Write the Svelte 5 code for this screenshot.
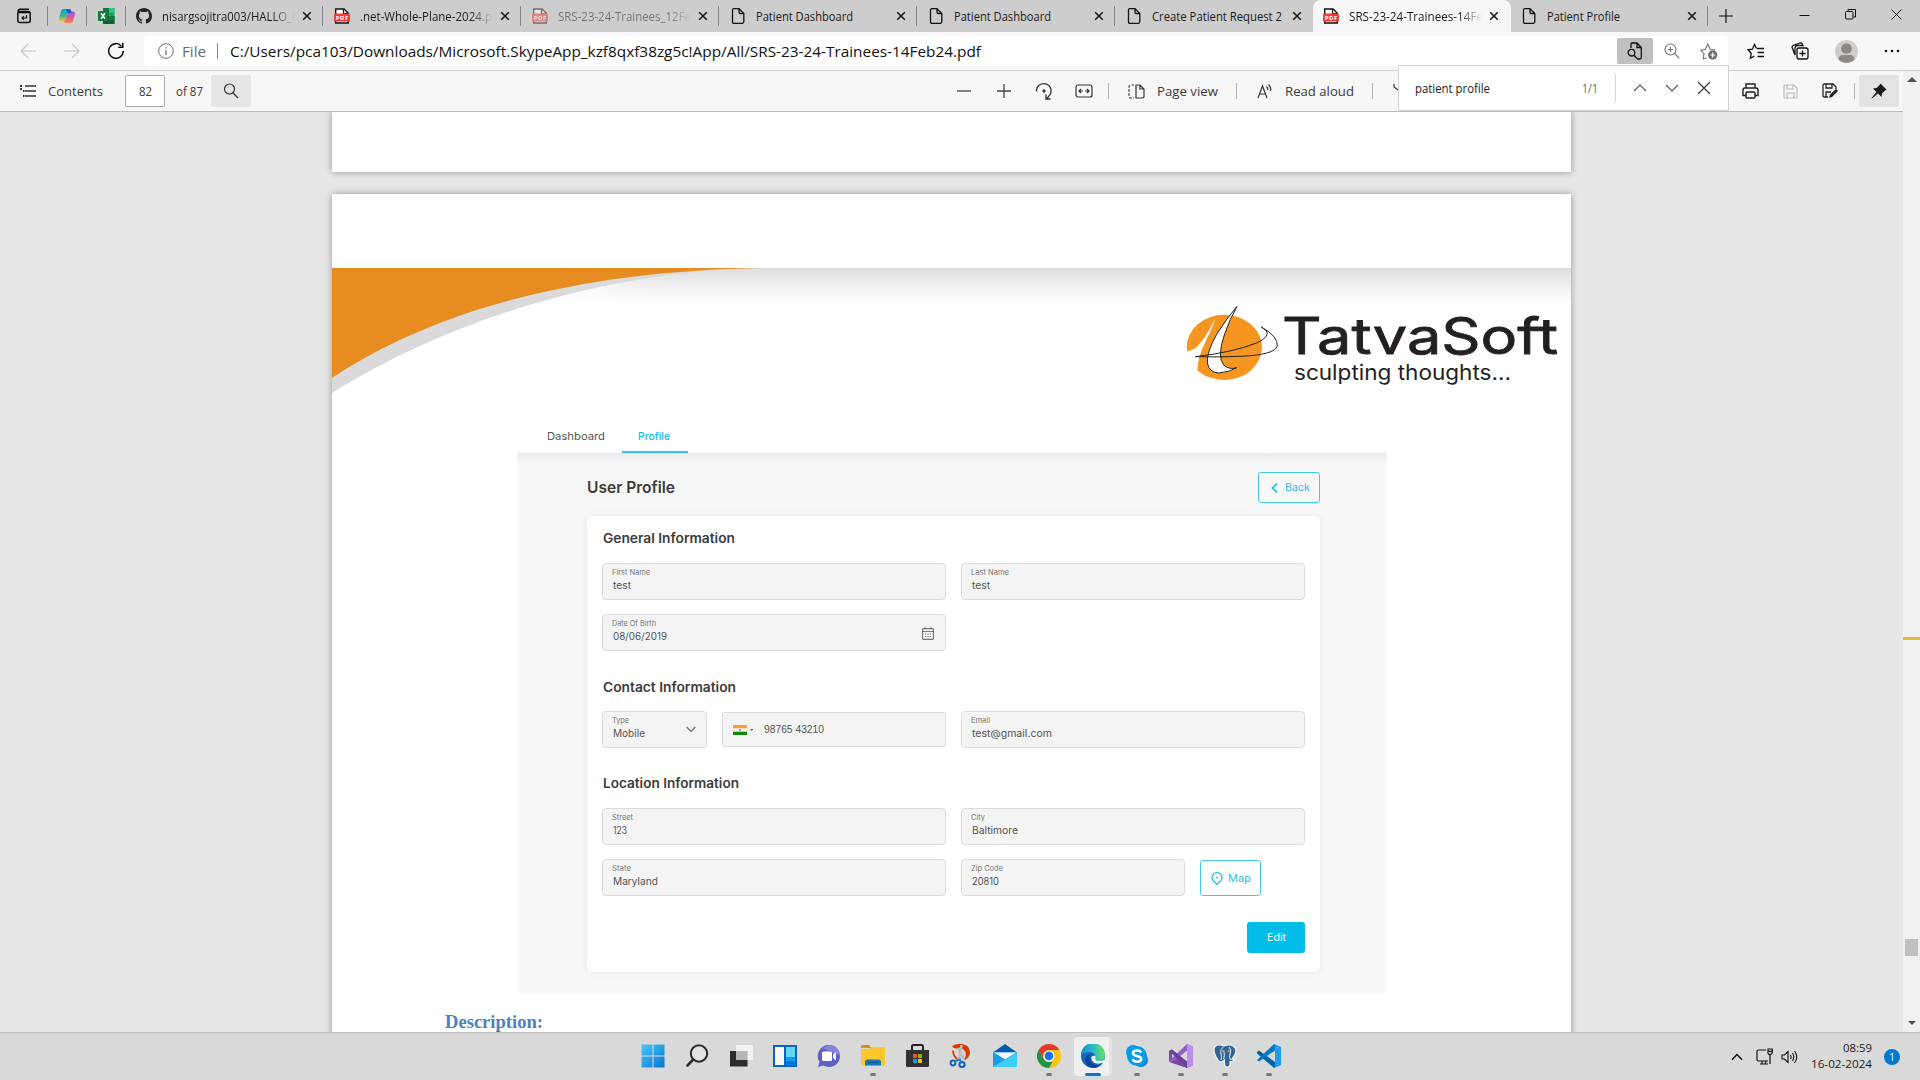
<script>
  const tabs = [
    { icon: 'github', title: 'nisargsojitra003/HALLO_P', width: 137 },
    { icon: 'pdf', title: '.net-Whole-Plane-2024.pd', width: 139 },
    { icon: 'pdf', title: 'SRS-23-24-Trainees_12Fe', width: 133, faded: true },
    { icon: 'page', title: 'Patient Dashboard', width: 97 },
    { icon: 'page', title: 'Patient Dashboard', width: 97 },
    { icon: 'page', title: 'Create Patient Request 2', width: 130 },
    { icon: 'pdf', title: 'SRS-23-24-Trainees-14Fe', width: 134, active: true },
    { icon: 'page', title: 'Patient Profile', width: 73 }
  ];
  const apps = ['start', 'search', 'taskview', 'widgets', 'chat', 'explorer', 'store', 'snip', 'mail', 'chrome', 'edge', 'skype', 'vs', 'postgres', 'vscode'];
  const running = ['explorer', 'chrome', 'edge', 'skype', 'vs', 'postgres', 'vscode'];
</script>

{#snippet label(text, width, kind, height = 20)}
  <svg class="label {kind}" {width} {height}>
    <text x="0" y={height / 2} dominant-baseline="central" textLength={width} lengthAdjust="spacingAndGlyphs">{text}</text>
  </svg>
{/snippet}

{#snippet field(name, nameWidth, value, valueWidth)}
  <div class="field">
    {@render label(name, nameWidth, 'field-name', 12)}
    <div class="field-value">{@render label(value, valueWidth, 'value', 15)}</div>
  </div>
{/snippet}

<div class="screen">
  <div class="tabstrip">
    <div class="pinned first">
      <svg width="16" height="16" viewBox="0 0 16 16" fill="none" stroke="#111" stroke-width="1.5"><rect x="1.8" y="3.5" width="12.4" height="11" rx="2" /><path d="M2 3.5Q2 1.2 4 1.2H13M2 4.5H14" /><path d="M10.5 7V10H6M7.8 8.3 6 10l1.8 1.8" stroke-width="1.2" /></svg>
    </div>
    <div class="pinned">
      <svg width="18" height="16" viewBox="0 0 18 16"><defs><linearGradient id="cp1" x1="0" y1="0" x2="0" y2="1"><stop stop-color="#159ce8" /><stop offset=".55" stop-color="#32b98b" /><stop offset="1" stop-color="#f3c530" /></linearGradient><linearGradient id="cp2" x1="0" y1="0" x2="0" y2="1"><stop stop-color="#8a62e8" /><stop offset=".5" stop-color="#e35696" /><stop offset="1" stop-color="#f78854" /></linearGradient></defs><path d="M5 1h6q1.6 0 2 1.6L13.6 5H10L8 11Q7.400 13.200 5.200 13.200H3Q.4 13 1.200 10L3 3Q3.500 1 5 1Z" fill="url(#cp1)" /><path d="M13 3.500h2q2.600.2 1.800 3.300l-1.800 6.400Q14.500 15 12.800 15H7.500Q6 15 5.500 13.300 7.300 13 8 11l1.800-6Q10.400 3.500 13 3.500Z" fill="url(#cp2)" /><path d="M8 1h3q1.600 0 2 1.600L13.600 5H10Z" fill="#1b55c4" /></svg>
    </div>
    <div class="pinned">
      <svg width="17" height="16" viewBox="0 0 17 16"><path d="M5 0h11.500v16H5z" fill="#21a366" /><path d="M5 0h6v8H5z" fill="#107c41" /><path d="M11 0h5.500v4.500H11z" fill="#33c481" /><path d="M5 8h11.500v8H5z" fill="#185c37" /><path d="M11 8h5.500v4H11z" fill="#107c41" /><rect y="3" width="10" height="10" rx="1" fill="#107c41" /><path d="M3 5.300 7 10.800M7 5.300 3 10.800" stroke="#fff" stroke-width="1.500" /></svg>
    </div>
    {#each tabs as tab}
      <div class="tab" class:active={tab.active} class:faded={tab.faded}>
        <span class="tab-icon">
          {#if tab.icon === 'github'}
            <svg width="16" height="16" viewBox="0 0 16 16"><path fill="#1f252b" d="M8 0C3.580 0 0 3.580 0 8c0 3.540 2.290 6.530 5.470 7.590.4.070.550-.170.550-.380v-1.490c-2.230.480-2.690-.950-2.690-.950-.360-.920-.890-1.170-.890-1.170-.730-.5.050-.490.050-.490.8.060 1.230.830 1.230.830.710 1.220 1.870.870 2.330.660.070-.520.280-.870.510-1.070-1.780-.2-3.640-.890-3.640-3.950 0-.870.310-1.590.820-2.150-.080-.2-.360-1.020.080-2.120 0 0 .670-.210 2.200.820a7.600 7.600 0 0 1 4 0c1.530-1.040 2.200-.820 2.200-.820.440 1.100.160 1.920.080 2.120.510.560.820 1.270.820 2.150 0 3.070-1.870 3.750-3.650 3.950.290.250.540.730.540 1.480v2.200c0 .210.150.460.550.380A8 8 0 0 0 16 8c0-4.420-3.580-8-8-8Z" /></svg>
          {:else if tab.icon === 'pdf'}
            <svg width="16" height="16" viewBox="0 0 16 16"><path d="M1.700 15V1H10l4.300 4.200V15Z" fill="#fff" stroke="#111" stroke-width="1.400" /><path d="M9.500 1v4.500H14" fill="none" stroke="#111" stroke-width="1.200" /><rect y="5.500" width="16" height="8" rx="1" fill="#f33c38" /><text x="1.800" y="11.900" font-size="6" font-weight="700" fill="#fff" textLength="12.500">PDF</text></svg>
          {:else}
            <svg width="16" height="16" viewBox="0 0 16 16" fill="none" stroke="#111" stroke-width="1.300"><path d="M2.500 2.200Q2.500.7 4 .7H9L13.800 5.500V13.800Q13.800 15.300 12.300 15.300H4Q2.500 15.300 2.500 13.800ZM9 1v3.300Q9 5.500 10.200 5.500H13.800" /></svg>
          {/if}
        </span>
        <span class="tab-title" class:long={tab.width > 132}>{@render label(tab.title, tab.width, 'small')}</span>
        <svg class="tab-close" width="10" height="10" viewBox="0 0 10 10" stroke="#111" stroke-width="1.500"><path d="M1.200 1.200 8.800 8.800M8.800 1.200 1.200 8.800" /></svg>
      </div>
    {/each}
    <div class="newtab"><svg width="14" height="14" viewBox="0 0 14 14" stroke="#111" stroke-width="1.200"><path d="M7 0V14M0 7H14" /></svg></div>
    <div class="window-controls">
      <svg width="11" height="11" stroke="#111"><path d="M.5 6.500H10.500" /></svg>
      <svg width="11" height="11" fill="none" stroke="#111"><rect x=".5" y="2.500" width="7.500" height="7.500" rx="1" /><path d="M3 2.500V.5H10.500V8H8.500" /></svg>
      <svg width="11" height="11" stroke="#111"><path d="M.5.5 10.500 10.500M10.500.5.5 10.500" /></svg>
    </div>
  </div>

  <div class="addressbar">
    <div class="nav">
      <svg width="16" height="16" fill="none" stroke="#c6c6c6" stroke-width="1.200"><path d="M16 8H1M8 1 1 8l7 7" /></svg>
      <svg width="16" height="16" fill="none" stroke="#c6c6c6" stroke-width="1.200"><path d="M0 8H15M8 1l7 7-7 7" /></svg>
      <svg width="17" height="18" fill="none" stroke="#111" stroke-width="1.500"><path d="M15.300 9A7.300 7.300 0 1 1 13.400 4M14.800.8V5.200H10.300" /></svg>
    </div>
    <div class="urlbox">
      <svg width="16" height="16" fill="none" stroke="#6e6e6e"><circle cx="8" cy="8" r="7.300" /><path d="M8 7V12M8 4.200V5.500" stroke-width="1.300" /></svg>
      <span class="scheme">{@render label('File', 24, 'muted')}</span>
      <i class="vline url-line"></i>
      {@render label('C:/Users/pca103/Downloads/Microsoft.SkypeApp_kzf8qxf38zg5c!App/All/SRS-23-24-Trainees-14Feb24.pdf', 751, 'url')}
      <div class="url-actions">
        <div class="pressed"><svg width="16" height="18" viewBox="0 0 16 18" fill="none" stroke="#111" stroke-width="1.300"><path d="M4 6V2.200Q4 1 5.200 1H10L14.300 5.500V15.500Q14.300 17 13 17H10M10 1V5.500H14.300" /><circle cx="4.500" cy="10.700" r="3.300" /><path d="M7 13.200 10 16.500" /></svg></div>
        <div class="cell38"><svg width="16" height="16" fill="none" stroke="#777" stroke-width="1.200"><circle cx="6.500" cy="6.500" r="5.500" /><path d="M10.500 10.500 15.300 15.300M3.800 6.500H9.200M6.500 3.800V9.200" /></svg></div>
        <div class="cell38"><svg width="18" height="17" viewBox="0 0 18 17" fill="none" stroke="#777" stroke-width="1.200"><path d="M7 15 3.200 15.800 4 10.700.8 7.300 5.200 6.500 7.800 1 10.200 6.500 15 7" /><circle cx="12.700" cy="12" r="4.700" fill="#707070" stroke="none" /><path d="M12.700 9.500V14.500M10.200 12H15.200" stroke="#fff" /></svg></div>
      </div>
    </div>
    <div class="browser-actions">
      <svg width="18" height="17" viewBox="0 0 18 17" fill="none" stroke="#111" stroke-width="1.300"><path d="M9.500 5.500 7.500 1.500 5.300 6.200 1 6.800 4.200 10.200 3.400 15.300 7.300 13M10 5.500H17M10.500 9.500H17M10.500 13.500H17" /></svg>
      <svg width="18" height="18" viewBox="0 0 18 18" fill="none" stroke="#111" stroke-width="1.300"><rect x="6" y="6" width="11" height="11" rx="2" /><path d="M11.500 8.500V14.500M8.500 11.500H14.500M4 13 1.200 5.500Q.8 4 2.300 3.300L9 1Q10.500.6 11.300 2L12 3.500H6Q4 4 4 6Z" /></svg>
      <svg width="23" height="23" viewBox="0 0 23 23"><circle cx="11.500" cy="11.500" r="11.500" fill="#d0cec9" /><circle cx="11.500" cy="8.500" r="5.300" fill="#8e8984" /><path d="M3.500 19.500Q3.500 15 8 15H15Q19.500 15 19.500 19.500A11.500 11.500 0 0 1 3.500 19.500Z" fill="#8e8984" /></svg>
      <svg width="16" height="16"><path d="M2 8h0M8 8h0M14 8h0" stroke="#111" stroke-width="2.600" stroke-linecap="round" /></svg>
    </div>
    <div class="findbox">
      {@render label('patient profile', 75, 'small')}
      <span class="count">{@render label('1/1', 16, 'small dim')}</span>
      <i class="vline find-line"></i>
      <div class="find-actions">
        <svg width="14" height="14" fill="none" stroke="#555" stroke-width="1.100"><path d="M1 10 7 4l6 6" /></svg>
        <svg width="14" height="14" fill="none" stroke="#555" stroke-width="1.100"><path d="M1 4l6 6 6-6" /></svg>
        <svg width="14" height="14" stroke="#333" stroke-width="1.100"><path d="M1 1 13 13M13 1 1 13" /></svg>
      </div>
    </div>
  </div>

  <div class="workspace">
    <div class="viewer">
      <div class="toolbar">
        <div class="tool-left">
          <svg class="toc" width="17" height="14" fill="none" stroke="#333" stroke-width="1.300"><path d="M5 2H16M5 7H16M5 12H16" /><path d="M0 2H2M3 7H4.500M3 12H4.500M0 5H2" stroke-width="1.800" /></svg>
          {@render label('Contents', 55, 'medium')}
          <div class="page-input">{@render label('82', 13, 'medium')}</div>
          {@render label('of 87', 27, 'medium')}
          <div class="find-button"><svg width="16" height="16" fill="none" stroke="#333" stroke-width="1.200"><circle cx="6.500" cy="6" r="5" /><path d="M10 10 15 15" /></svg></div>
        </div>
        <div class="tool-mid">
          <div class="cell40"><svg width="14" height="14" stroke="#444" stroke-width="1.300"><path d="M0 7H14" /></svg></div>
          <div class="cell40"><svg width="14" height="14" stroke="#444" stroke-width="1.300"><path d="M0 7H14M7 0V14" /></svg></div>
          <div class="cell40"><svg width="18" height="18" fill="none" stroke="#333" stroke-width="1.300"><path d="M1.500 9.500A7.300 7.300 0 1 1 13.500 14.500L12 16.500M11 12.500v4.500h4.500" /><circle cx="9" cy="9" r="1" /></svg></div>
          <div class="cell40"><svg width="18" height="14" fill="none" stroke="#333" stroke-width="1.200"><rect x="1" y="1" width="16" height="12" rx="2" /><path d="M4 7H8M10 7H14M6 5 4 7l2 2M12 5l2 2-2 2" /></svg></div>
          <i class="vline bar-line"></i>
          <svg class="pv" width="17" height="15" viewBox="0 0 17 15" fill="none" stroke="#333" stroke-width="1.200"><path d="M8 1H12L16 5V12.500Q16 14 14.500 14H8ZM12 1V5H16" /><path d="M6 1H3Q1 1 1 3V12Q1 14 3 14H6" stroke-dasharray="2.500 1.500" /></svg>
          {@render label('Page view', 61, 'medium')}
          <i class="vline bar-line second"></i>
          <svg class="aloud" width="17" height="16" viewBox="0 0 17 16" fill="none" stroke="#333" stroke-width="1.200"><path d="M1 15 5.500 3 10 15M2.700 11H8.300M9.500 3.500Q11 5 10.700 7M11.500 1.500Q14.500 4.500 13.500 8" /></svg>
          {@render label('Read aloud', 69, 'medium')}
          <i class="vline bar-line third"></i>
          <svg class="draw" width="18" height="16" fill="none" stroke="#333" stroke-width="1.200"><path d="M1 1V4L5 7H13L17 4V1M6 8v6h6V8" /></svg>
        </div>
        <div class="tool-right">
          <div class="cell40"><svg width="17" height="16" viewBox="0 0 17 16" fill="none" stroke="#222" stroke-width="1.400"><path d="M4 5V1H13V5M4 12.500H1V7Q1 5 3 5H14Q16 5 16 7V12.500H13" /><rect x="4" y="9" width="9" height="6" rx="1" /></svg></div>
          <div class="cell40"><svg width="15" height="15" viewBox="0 0 15 15" fill="none" stroke="#bbb" stroke-width="1.200"><path d="M1 2Q1 1 2 1H11L14 4V13Q14 14 13 14H2Q1 14 1 13ZM4 1V5H10V1M4 14V9H11V14" /></svg></div>
          <div class="cell40"><svg width="17" height="16" viewBox="0 0 17 16" fill="none" stroke="#222" stroke-width="1.300"><path d="M6 14H2.500Q1 14 1 12.500V2.500Q1 1 2.500 1H11L14 4V6M4 1V5H10V1M4 14V9H9" /><path d="M7 15 8 11.500 14 6 16 8 10 14Z" fill="#222" stroke="none" /></svg></div>
          <i class="vline bar-line"></i>
          <div class="pin"><svg width="16" height="16" viewBox="0 0 16 16"><path d="M9.500.5 15.500 6.500 14 7.500 11 10.500 10.500 14 7 10.500 1 15.500.5 15 5.500 9 2 5.500 5.500 5 8.500 2Z" fill="#1a1a1a" /></svg></div>
        </div>
      </div>

      <div class="canvas">
        <div class="sheet previous"></div>
        <div class="sheet current">
          <svg class="banner" width="1239" height="145" viewBox="0 0 1239 145">
            <defs>
              <linearGradient id="shade" x1="0" y1="0" x2="0" y2="1"><stop stop-color="#dedede" /><stop offset=".5" stop-color="#f0f0f0" /><stop offset="1" stop-color="#fff" /></linearGradient>
              <linearGradient id="fade-left" x1="0" x2="1" y1="0" y2="0"><stop stop-color="#fff" /><stop offset="1" stop-color="#fff" stop-opacity="0" /></linearGradient>
            </defs>
            <rect width="1239" height="36" fill="url(#shade)" />
            <rect x="150" width="180" height="36" fill="url(#fade-left)" />
            <path d="M0 0H429C280 3 124 48 0 125Z" fill="#dadada" />
            <path d="M0 0H429C260 3 112 36 0 110Z" fill="#e68c20" />
            <g transform="translate(768 -28) scale(.33333)">
              <ellipse cx="373" cy="322" rx="113" ry="98" fill="#f49620" />
              <path d="M345 236Q320 290 291 320Q276 333 258 334L250 400 292 394Q294 350 318 303Q338 268 345 236Z" fill="#fff" />
              <path d="M293 391Q293 350 318 303L345 243 370 240 350 370 320 410Z" fill="#f49620" />
              <path d="M411 199Q380 235 350 283Q320 335 322 369Q328 398 356 399Q388 397 410 383Q388 390 372 376Q350 352 373 285Q390 235 411 199Z" fill="#fff" stroke="#222" stroke-width="3" />
              <path d="M286 350Q395 338 470 309Q512 289 499 272L484 261Q535 290 532 318Q524 345 420 349Q350 352 286 350" fill="none" stroke="#222" stroke-width="3" />
            </g>
            <text class="brand" x="950" y="86" textLength="276" lengthAdjust="spacingAndGlyphs">TatvaSoft</text>
            <text class="motto" x="962" y="112" textLength="217" lengthAdjust="spacingAndGlyphs">sculpting thoughts...</text>
          </svg>

          <div class="portal">
            <div class="portal-tabs">
              <div class="ptab">{@render label('Dashboard', 58, 'ptext')}</div>
              <div class="ptab selected">{@render label('Profile', 32, 'ptext strong')}</div>
            </div>
            <div class="portal-body">
              <div class="title-row">
                {@render label('User Profile', 88, 'title', 22)}
                <div class="back"><svg width="7" height="10" fill="none" stroke="#17b9e6" stroke-width="1.600"><path d="M6 .7 1.500 5 6 9.300" /></svg>{@render label('Back', 25, 'btn', 18)}</div>
              </div>
              <div class="card">
                <div class="heading">{@render label('General Information', 132, 'section')}</div>
                <div class="grid">
                  {@render field('First Name', 38, 'test', 18)}
                  {@render field('Last Name', 38, 'test', 18)}
                  <div class="with-icon">
                    {@render field('Date Of Birth', 44, '08/06/2019', 54)}
                    <svg class="calendar" width="12" height="13" viewBox="0 0 12 13" fill="none" stroke="#777" stroke-width="1.200"><rect x=".6" y="1.600" width="10.800" height="10.800" rx=".8" /><path d="M.6 4.500H11.400M3 0V2M9 0V2" /><path d="M3 7H9M3 9.500H9" stroke-dasharray="1.400 .9" /></svg>
                  </div>
                </div>
                <div class="heading contact">{@render label('Contact Information', 133, 'section')}</div>
                <div class="grid">
                  <div class="phone-row">
                    <div class="with-icon type">
                      {@render field('Type', 17, 'Mobile', 32)}
                      <svg class="chevron" width="10" height="7" fill="none" stroke="#777" stroke-width="1.300"><path d="M.7 1 5 5.500 9.300 1" /></svg>
                    </div>
                    <div class="phone">
                      <svg width="20" height="10" viewBox="0 0 20 10"><rect width="14" height="10" fill="#f4f4f4" /><rect width="14" height="3.200" fill="#f93" /><rect y="6.700" width="14" height="3.300" fill="#138808" /><circle cx="7" cy="5" r="1" fill="#8088a0" /><path d="M17.200 4.200h3L18.700 6Z" fill="#444" /></svg>
                      {@render label('98765 43210', 60, 'digits', 18)}
                    </div>
                  </div>
                  {@render field('Email', 19, 'test@gmail.com', 80)}
                </div>
                <div class="heading location">{@render label('Location Information', 136, 'section')}</div>
                <div class="grid">
                  {@render field('Street', 21, '123', 14)}
                  {@render field('City', 14, 'Baltimore', 46)}
                  {@render field('State', 19, 'Maryland', 45)}
                  <div class="zip-row">
                    {@render field('Zip Code', 32, '20810', 27)}
                    <div class="map"><svg width="12" height="13" viewBox="0 0 12 13" fill="none" stroke="#17b9e6" stroke-width="1.300"><path d="M6 12.200Q1 8.500 1 5.500A5 4.800 0 0 1 11 5.500Q11 8.500 6 12.200Z" /><circle cx="6" cy="5.500" r=".9" fill="#17b9e6" stroke="none" /></svg>{@render label('Map', 23, 'btn')}</div>
                  </div>
                </div>
                <div class="edit">{@render label('Edit', 19, 'btn white', 18)}</div>
              </div>
            </div>
          </div>
          <div class="description">{@render label('Description:', 98, 'desc', 24)}</div>
        </div>
      </div>
    </div>
    <div class="scrollbar">
      <svg width="10" height="5"><path d="M0 5 5 0 10 5Z" fill="#505050" /></svg>
      <div class="track"><i class="hit"></i><i class="thumb"></i></div>
      <svg width="8" height="4"><path d="M0 0H8L4 4Z" fill="#505050" /></svg>
    </div>
  </div>

  <div class="taskbar">
    <div class="apps">
      {#each apps as app}
        <div class="app" class:focused={app === 'edge'} class:running={running.includes(app)}>
          <svg width="24" height="24" viewBox="0 0 24 24">
            {#if app === 'start'}
              <defs><linearGradient id="win" x1="0" y1="0" x2="1" y2="1"><stop stop-color="#47cbfa" /><stop offset="1" stop-color="#0874d0" /></linearGradient></defs>
              <path d="M.5.5h11v11H.5zM12.500.5h11v11h-11zM.5 12.500h11v11H.5zM12.500 12.500h11v11h-11z" fill="url(#win)" />
            {:else if app === 'search'}
              <circle cx="14" cy="9.500" r="8.200" fill="#e4e4e4" stroke="#2c2c2c" stroke-width="2" /><path d="M8.200 15.500 2.500 21.500" stroke="#2c2c2c" stroke-width="2.600" stroke-linecap="round" />
            {:else if app === 'taskview'}
              <rect x="1" y="7" width="17.500" height="15.500" fill="#2c2c2c" /><rect x="7" y="1" width="17" height="15" fill="#f5f5f5" fill-opacity=".9" /><path d="M7 7h11.500v9H7z" fill="#b6b6b6" />
            {:else if app === 'widgets'}
              <path d="M0 1h24v22H0z" fill="#0a67b8" /><path d="M2 3h9v18H2z" fill="#f8f8f8" /><path d="M13 3h9v10h-9z" fill="#62d5fb" /><path d="M13 13h9v8h-9z" fill="#1795ef" /><path d="M13 17h9v4h-9z" fill="#0078e8" />
            {:else if app === 'chat'}
              <path d="M12 1A11 11 0 1 1 6.500 21.500L1 23 2.500 18A11 11 0 0 1 12 1Z" fill="#605fc5" /><path d="M12 1A11 11 0 0 1 23 12Q16 8 5 4Z" fill="#8584dc" /><rect x="5" y="7.500" width="10" height="9.500" rx="1.500" fill="#fff" /><path d="M16 10.500 19 8v8.500L16 14Z" fill="#fff" />
            {:else if app === 'explorer'}
              <path d="M0 2Q0 1 1 1H8l2.500 3H0Z" fill="#d89607" /><path d="M0 5H8l3-2H24V21.500H0Z" fill="#fbc72d" /><path d="M4 21.500V18q0-2.500 2.500-2.500h11Q20 15.500 20 18v3.500Z" fill="#1479bd" /><path d="M7 18.500H17" stroke="#0c558b" stroke-width="1.500" />
            {:else if app === 'store'}
              <path d="M7 6.500V2.500Q7 1 8.500 1h8Q18 1 18 2.500V6.500" fill="none" stroke="#222" stroke-width="2" /><path d="M1 6H24V21.500Q24 23 22.500 23h-20Q1 23 1 21.500Z" fill="#303030" /><path d="M8 10h4v4H8z" fill="#f25022" /><path d="M13 10h4v4h-4z" fill="#7fba00" /><path d="M8 15h4v4H8z" fill="#00a4ef" /><path d="M13 15h4v4h-4z" fill="#ffb900" />
            {:else if app === 'snip'}
              <path d="M3 2.500Q5 0 9 0H13Q21 1 21 9Q20.500 14 15 16.500Q17.500 12 16.500 8Q14 3 8 4.500Q5 5 3 2.500Z" fill="#d83b01" /><path d="M4 6.500Q4 12 9 16" fill="none" stroke="#d83b01" stroke-width="1.800" /><path d="M9 4 15 15M12.500 1 9.500 17" stroke="#bdbdbd" stroke-width="2.600" /><circle cx="4" cy="19" r="2.400" fill="none" stroke="#0d65b5" stroke-width="2" /><circle cx="13" cy="20.500" r="2.600" fill="none" stroke="#0d65b5" stroke-width="2" /><path d="M6 17.500 11 15.500 12 18" fill="none" stroke="#1684d8" stroke-width="1.800" />
            {:else if app === 'mail'}
              <path d="M0 8.500 12 0 24 8.500Z" fill="#0759a9" /><path d="M0 8H24V23H0Z" fill="#20a6e8" /><path d="M1 8.500H23L12 15.500Z" fill="#f5f8fa" /><path d="M0 8.500 12 15.500 0 23Z" fill="#1b9de2" /><path d="M0 23 24 8.500V23Z" fill="#3ccdf8" />
            {:else if app === 'chrome'}
              <circle cx="12" cy="12" r="12" fill="#fbc116" /><path d="M1.600 6A12 12 0 0 1 22.400 6H12A6 6 0 0 0 6.800 15Z" fill="#e33b2e" /><path d="M1.600 6 6.800 15A6 6 0 0 0 12 18h5.200L12 24A12 12 0 0 1 1.600 6Z" fill="#229342" /><path d="M17.200 15A6 6 0 0 0 12 6H22.400A12 12 0 0 1 12 24Z" fill="#fcc31c" /><circle cx="12" cy="12" r="5.600" fill="#fff" /><circle cx="12" cy="12" r="4.400" fill="#1a73e8" />
            {:else if app === 'edge'}
              <defs><linearGradient id="edge-top" x1="0" x2="1" y1=".5" y2=".4"><stop stop-color="#128acb" /><stop offset=".5" stop-color="#2cbccb" /><stop offset="1" stop-color="#6ce651" /></linearGradient></defs>
              <circle cx="12" cy="12" r="12" fill="#126ac0" /><path d="M0 11A12 12 0 0 1 24 11Q24 17 18 17Q14 17 14.500 14.500Q16 12 13 9.500Q7 6 0 11Z" fill="url(#edge-top)" /><path d="M8.500 12Q7.500 20 16 21.500Q20 21.500 22.500 18Q18 24 12 24Q4 22 4 15Q5 11.500 10 9.500Q8.500 10.500 8.500 12Z" fill="#0c4592" /><path d="M14 11.500Q15.500 13 14.500 14.500Q14 17 18 17Q21 17 23.500 15.500L22.500 18.500Q18 20.500 13.500 19Q9.500 16 10.500 12.500Z" fill="#f2f4f5" />
            {:else if app === 'skype'}
              <circle cx="8" cy="8" r="7" fill="#0a9be8" /><circle cx="16" cy="16" r="7" fill="#0085dc" /><circle cx="12" cy="12" r="10" fill="#069ce9" /><path d="M16 8.500Q15 6.500 12 6.500Q8 6.500 8 9Q8 11.300 12 12Q16.200 12.800 16.200 15Q16.200 17.700 12 17.700Q8.500 17.700 7.700 15.200" fill="none" stroke="#fff" stroke-width="2.500" />
            {:else if app === 'vs'}
              <path d="M0 7 3 5.500 18 18V24L1.500 18.500 0 17Z" fill="#7b48a8" /><path d="M3 8.500V15.500L6.500 12Z" fill="#d9d9d9" /><path d="M0 17 18 0 24 2.500V21.500L18 24V6.500L3 18.500Z" fill="#8e5fc5" /><path d="M18 0 24 2.500V21.500L18 24Z" fill="#bd8ef0" /><path d="M3 5.500 18 17.500V24L0 7Z" fill="#68429a" />
            {:else if app === 'postgres'}
              <path d="M1 6Q1 1 6 1Q9 1 11 2Q16 0 20 2Q24 4 22.500 9Q21 13 19 15Q21 16 22 16Q20 18 17 17.500V21Q16 24 12.500 22.500Q11 21 11.500 16Q7 20 5 16Q1 10 1 6Z" fill="#34648f" stroke="#f2f5f7" stroke-width="1.200" /><path d="M10.500 3Q7 5 8 10Q9 14 8 16M16 3Q19 6 17 10 15.500 14 18 16M11 8Q12 12 10.500 15" fill="none" stroke="#f0f3f5" /><path d="M9.500 7h2M15 7h1.500" stroke="#fff" stroke-width="1.200" />
            {:else}
              <path d="M0 8 2 6.500 18 18V24Q17 24 16 23L0 9.500Z" fill="#0065a9" /><path d="M0 16 17 0 18 .2V6.500L2 17.500Z" fill="#007acc" /><path d="M17 0 24 3V21L17 24Q18 23.500 18 22V2Q18 .5 17 0Z" fill="#1f9cf0" />
            {/if}
          </svg>
          <i class="indicator"></i>
        </div>
      {/each}
    </div>
    <div class="tray">
      <svg width="12" height="8" fill="none" stroke="#111" stroke-width="1.400"><path d="M1 6.700 6 1.500l5 5.200" /></svg>
      <svg class="net" width="17" height="17" viewBox="0 0 17 17" fill="none" stroke="#111" stroke-width="1.200"><path d="M10 2H2.500Q1 2 1 3.500V11.500Q1 13 2.500 13H12M6 13V16M9.500 13V16M4 16H12M14 7V16M12 1H16.300V4Q16.300 6.500 14 6.500T12 4ZM12 3.300H16" /></svg>
      <svg class="sound" width="17" height="14" viewBox="0 0 17 14" fill="none" stroke="#111" stroke-width="1.100"><path d="M1 5H3.500L7 1.500V12.500L3.500 9H1ZM9.500 5Q10.800 7 9.500 9M11.500 3Q14 7 11.500 11M13.500 1Q18 7 13.500 13" /></svg>
      <div class="clock">{@render label('08:59', 29, 'clocktext', 16)}{@render label('16-02-2024', 61, 'clocktext', 16)}</div>
      <div class="badge">1</div>
    </div>
  </div>
</div>

<style>
  :global(body) { margin: 0; overflow: hidden; }
  .screen { width: 1920px; height: 1080px; display: flex; flex-direction: column; background: #e6e6e6; font-family: 'Open Sans', 'Noto Sans', sans-serif; color: #111; overflow: hidden; }
  .screen * { box-sizing: border-box; }
  svg { display: block; flex: none; }
  .label { overflow: visible; fill: #1a1a1a; }
  .small { font-size: 12px; }
  .dim { fill: #666; }
  .muted { font-size: 14.5px; fill: #6b6b6b; }
  .url { font-size: 14.5px; fill: #111; }
  .medium { font-size: 13.3px; fill: #3b3b3b; }
  .vline { width: 1px; background: #b5b5b5; flex: none; }

  .tabstrip { height: 32px; background: #cdcdcd; display: flex; flex: none; align-items: center; }
  .pinned { width: 39px; height: 20px; border-right: 1px solid #858585; display: flex; flex: none; align-items: center; justify-content: center; }
  .pinned.first { width: 48px; }
  .tab { width: 198px; height: 32px; flex: none; display: flex; align-items: center; padding-left: 10px; background: linear-gradient(#858585, #858585) right 1px center / 1px 20px no-repeat; }
  .tab.active { background: #f7f7f7; border-radius: 8px 8px 0 0; margin-left: -1px; }
  .tab:last-of-type { width: 197px; }
  .tab:has(+ .active) { background: none; }
  .tab-icon { width: 26px; flex: none; }
  .tab-title { width: 137px; overflow: hidden; flex: none; }
  .tab-title.long { width: 133px; margin-right: 4px; mask-image: linear-gradient(90deg, #000 110px, transparent 133px); }
  .tab-close { margin-left: 3px; }
  .faded .tab-icon, .faded .tab-title { opacity: .5; }
  .newtab { width: 36px; display: flex; justify-content: center; margin-left: -1px; }
  .window-controls { margin-left: auto; display: flex; gap: 35px; padding: 0 18px 4px 0; }

  .addressbar { height: 39px; background: #f7f7f7; border-bottom: 1px solid #d1d1d1; display: flex; flex: none; align-items: center; position: relative; }
  .nav { width: 144px; display: flex; gap: 28px; padding-left: 20px; align-items: center; }
  .urlbox { width: 1584px; height: 30px; background: #fff; border-radius: 4px; display: flex; align-items: center; padding-left: 14px; }
  .scheme { margin-left: 8px; }
  .url-line { height: 16px; margin: 0 12px 0 11px; background: #888; }
  .url-actions { margin: 0 1px 0 auto; display: flex; align-items: center; }
  .pressed { width: 36px; height: 26px; border-radius: 2px; background: #c0c0c0; display: flex; justify-content: center; align-items: center; }
  .cell38 { width: 37px; display: flex; justify-content: center; }
  .browser-actions { display: flex; align-items: center; padding-left: 19px; gap: 26px; }
  .findbox { position: absolute; z-index: 5; left: 1398px; top: 33px; width: 331px; height: 46px; background: #fff; border: 1px solid #d4d4d4; display: flex; align-items: center; padding: 0 0 1px 16px; }
  .count { margin-left: 92px; }
  .find-line { height: 28px; margin-left: 17px; background: #d5d5d5; }
  .find-actions { display: flex; gap: 18px; margin-left: 17px; }

  .workspace { height: 961px; flex: none; display: flex; }
  .viewer { width: 1903px; height: 961px; overflow: hidden; }
  .toolbar { height: 41px; background: #f7f7f7; border-bottom: 1px solid #bdbdbd; display: flex; align-items: center; }
  .tool-left { display: flex; align-items: center; width: 944px; }
  .toc { margin: 0 11px 0 20px; }
  .page-input { width: 40px; height: 32px; margin: 0 11px 0 22px; background: #fff; border: 1px solid #ababab; border-radius: 2px; display: flex; align-items: center; justify-content: center; }
  .find-button { width: 40px; height: 32px; margin-left: 8px; background: #e5e5e5; border-radius: 2px; display: flex; align-items: center; justify-content: center; }
  .tool-mid { display: flex; align-items: center; width: 786px; }
  .cell40 { width: 40px; display: flex; justify-content: center; flex: none; }
  .bar-line { height: 16px; margin-left: 4px; }
  .pv { margin: 0 12px 0 19px; }
  .second { margin-left: 18px; }
  .aloud { margin: 0 11px 0 20px; }
  .third { margin-left: 18px; }
  .draw { margin-left: 20px; }
  .tool-right { display: flex; align-items: center; }
  .pin { width: 40px; height: 32px; margin-left: 4px; background: #e3e3e3; border-radius: 2px; display: flex; align-items: center; justify-content: center; }

  .canvas { height: 920px; overflow: hidden; padding-left: 332px; background: #e6e6e6; }
  .sheet { width: 1239px; background: #fff; box-shadow: 0 0 7px rgba(0, 0, 0, .35); }
  .previous { height: 60px; }
  .current { height: 900px; margin-top: 22px; padding-top: 74px; }
  .brand { font: 50px Inter, sans-serif; fill: #231f20; stroke: #231f20; stroke-width: .8px; }
  .motto { font: 21px Inter, sans-serif; fill: #231f20; }

  .portal { width: 870px; margin: 6px 0 0 185px; font-family: Inter, sans-serif; }
  .portal-tabs { height: 34px; display: flex; padding-left: 14px; }
  .ptab { padding: 7px 17px 0 16px; }
  .ptab.selected { width: 66px; border-bottom: 2px solid #37c5ea; }
  .ptext { font-size: 10.8px; fill: #555; }
  .strong { fill: #17b9e6; font-weight: 500; }
  .portal-body { height: 540px; padding: 19px 67px 0 70px; background: linear-gradient(#ebebeb, #f8f8f8 12px); }
  .title-row { height: 31px; display: flex; justify-content: space-between; }
  .title { font-size: 15.8px; font-weight: 600; fill: #3b3b3b; margin-top: 4px; }
  .back { width: 62px; height: 31px; border: 1px solid #43c9ec; border-radius: 3px; display: flex; align-items: center; padding-left: 12px; gap: 7px; }
  .btn { font-size: 10.3px; fill: #2abde6; margin-bottom: 1px; }
  .white { fill: #fff; }
  .card { height: 456px; margin-top: 13px; padding: 12px 15px 19px; background: #fff; border-radius: 6px; box-shadow: 0 0 8px rgba(0, 0, 0, .08); }
  .heading { height: 20px; margin-bottom: 15px; padding-left: .5px; }
  .contact { margin: 26px 0 14px; }
  .location { margin: 25px 0 15px; }
  .section { font-size: 13px; font-weight: 600; fill: #3b3b3b; }
  .grid { display: grid; grid-template-columns: 344px 344px; gap: 14px 15px; }
  .field { height: 37px; width: 100%; background: #f4f4f4; border: 1px solid #dadbdd; border-radius: 4px; padding: 2px 8.5px; }
  .field-name { font-size: 7.4px; fill: #777; }
  .field-value { padding-left: 1px; }
  .value { font-size: 9.7px; fill: #555; }
  .with-icon { position: relative; }
  .calendar { position: absolute; right: 12px; top: 13px; }
  .chevron { position: absolute; right: 11px; top: 15px; }
  .phone-row, .zip-row { display: grid; grid-template-columns: 105px 224px; gap: 15px; }
  .zip-row { grid-template-columns: 224px 61px; }
  .phone { height: 35px; margin-top: 1px; background: #f4f4f4; border: 1px solid #dadbe0; border-radius: 2px; padding-left: 10px; display: flex; align-items: center; gap: 11px; }
  .digits { font: 10.7px 'Liberation Sans', sans-serif; fill: #555; margin-bottom: 1px; }
  .map { height: 36px; margin-top: 1px; border: 1px solid #43c9ec; border-radius: 3px; display: flex; align-items: center; padding-left: 10px; gap: 5px; }
  .edit { width: 58px; height: 31px; margin: 26px 0 0 auto; background: #00bce9; border-radius: 3px; display: flex; align-items: center; justify-content: center; }
  .description { margin: 17px 0 0 113px; }
  .desc { font: bold 18.5px 'Liberation Serif', serif; fill: #4f81bd; }

  .scrollbar { width: 17px; background: #f1f1f1; display: flex; flex-direction: column; align-items: center; padding: 6px 0 7px; }
  .track { flex: 1; width: 17px; margin: 0; }
  .hit { display: block; height: 3px; margin-top: 555px; background: #dfbd3c; }
  .thumb { display: block; width: 13px; height: 17px; margin: 299px 2px 0; background: #c1c1c1; }

  .taskbar { height: 48px; flex: none; background: #d9d9d9; border-top: 1px solid #c1c1c1; display: flex; justify-content: space-between; }
  .apps { display: flex; padding-left: 631px; }
  .app { width: 44px; height: 47px; flex: none; display: flex; flex-direction: column; align-items: center; padding-top: 11px; }
  .indicator { display: none; width: 6px; height: 3px; margin-top: 5px; border-radius: 2px; background: #7c7c7c; }
  .running .indicator { display: block; }
  .focused { width: 38px; height: 39px; margin: 4px 3px 0; padding: 7px 0 0 3px; background: #f0f0f0; border-radius: 4px; border-right: 3px solid #e4e4e4; }
  .focused .indicator { width: 16px; background: #0078d4; }
  .tray { display: flex; align-items: center; padding-right: 20px; }
  .net { margin-left: 13px; }
  .sound { margin-left: 8px; }
  .clock { display: flex; flex-direction: column; align-items: flex-end; margin: 0 0 3px 13px; }
  .clocktext { font-size: 11.6px; }
  .badge { width: 16px; height: 16px; margin-left: 12px; border-radius: 50%; background: #0078d4; color: #fff; font-size: 10px; line-height: 16px; text-align: center; }
</style>
